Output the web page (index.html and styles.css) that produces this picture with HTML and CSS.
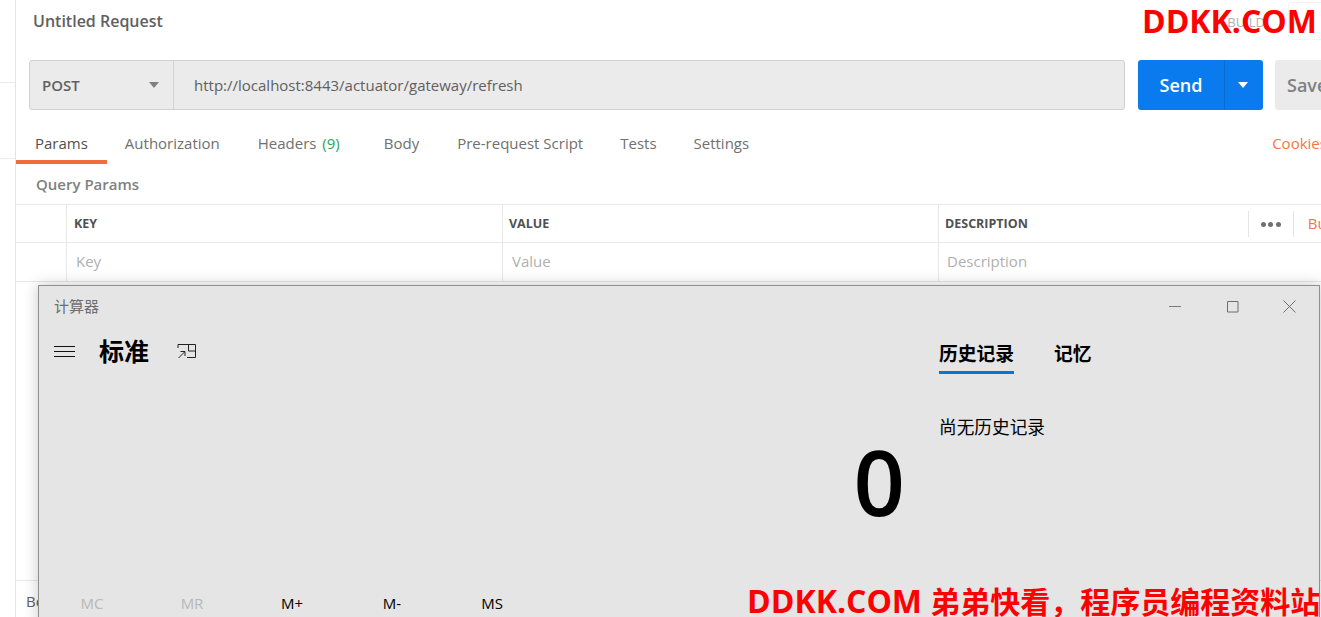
FILE: index.html
```html
<!DOCTYPE html>
<html lang="en">
<head>
    <meta charset="UTF-8">
    <meta name="viewport" content="width=device-width, initial-scale=1.0">
    <title>Untitled Request</title>
    <link rel="stylesheet" href="styles.css">
</head>
<body>
    <div class="app">
        <div class="sidebar">
            <div class="side-line side-line-first"></div>
            <div class="side-line side-line-second"></div>
        </div>
        <div class="main">
            <div class="title-row">
                <span class="title">Untitled Request</span>
                <span class="build">BUILD</span>
                <span class="build-box"></span>
            </div>
            <div class="url-row">
                <div class="url-box">
                    <div class="method">
                        <span>POST</span>
                        <span class="caret"></span>
                    </div>
                    <div class="url">http://localhost:8443/actuator/gateway/refresh</div>
                </div>
                <div class="send">
                    <span class="send-label">Send</span>
                    <span class="send-more"><span class="caret caret-white"></span></span>
                </div>
                <div class="save">Save</div>
            </div>
            <div class="tabs">
                <span class="tab tab-active">Params</span>
                <span class="tab">Authorization</span>
                <span class="tab tab-headers">Headers <em>(9)</em></span>
                <span class="tab">Body</span>
                <span class="tab tab-tight">Pre-request Script</span>
                <span class="tab tab-tight">Tests</span>
                <span class="tab">Settings</span>
                <span class="cookies">Cookies</span>
            </div>
            <div class="query-title">Query Params</div>
            <div class="table">
                <div class="table-row table-head">
                    <div class="cell cell-check"></div>
                    <div class="cell cell-key">KEY</div>
                    <div class="cell cell-value">VALUE</div>
                    <div class="cell cell-desc">
                        <span>DESCRIPTION</span>
                        <span class="more"><i></i><i></i><i></i></span>
                        <span class="bulk">Bulk Edit</span>
                    </div>
                </div>
                <div class="table-row table-empty">
                    <div class="cell cell-check"></div>
                    <div class="cell cell-key">Key</div>
                    <div class="cell cell-value">Value</div>
                    <div class="cell cell-desc">Description</div>
                </div>
            </div>
            <div class="response">
                <span>Body</span>
            </div>
        </div>
    </div>

    <div class="calc">
        <div class="calc-titlebar">
            <span class="calc-name">计算器</span>
            <div class="win-buttons">
                <svg width="13" height="13" viewBox="0 0 13 13"><path d="M0 6.500h12" stroke="#7a7a7a" fill="none"/></svg>
                <svg width="13" height="13" viewBox="0 0 13 13"><path d="M1.500 1.500h10.500v10.500h-10.500z" stroke="#6e6e6e" fill="none"/></svg>
                <svg width="13" height="13" viewBox="0 0 13 13"><path d="M.5.5l12 12M12.500.5l-12 12" stroke="#6e6e6e" fill="none"/></svg>
            </div>
        </div>
        <div class="calc-body">
            <div class="calc-left">
                <div class="calc-head">
                    <svg class="menu-icon" width="21" height="13" viewBox="0 0 21 13"><path d="M0 1.500h21M0 6.500h21M0 11.500h21" stroke="#111" fill="none"/></svg>
                    <span class="calc-mode">标准</span>
                    <svg class="overlay-icon" width="20" height="17" viewBox="0 0 20 17"><path d="M1 5V1.500h17.500v13H10M11.500 1.500v6.500h7M1.500 15l6-6M3.500 8.500h4.500v4.500" stroke="#222" fill="none"/></svg>
                </div>
                <div class="display">0</div>
                <div class="memory">
                    <span class="mem mem-off">MC</span>
                    <span class="mem mem-off">MR</span>
                    <span class="mem">M+</span>
                    <span class="mem">M-</span>
                    <span class="mem">MS</span>
                </div>
            </div>
            <div class="calc-right">
                <div class="calc-tabs">
                    <span class="calc-tab calc-tab-active">历史记录</span>
                    <span class="calc-tab">记忆</span>
                </div>
                <div class="no-history">尚无历史记录</div>
            </div>
        </div>
    </div>

    <div class="mark mark-top">DDKK.COM</div>
    <div class="mark mark-bottom">DDKK.COM <span class="mark-cjk">弟弟快看，程序员编程资料站</span></div>
</body>
</html>
```

FILE: styles.css
```css
* {
    box-sizing: border-box;
}

html, body {
    margin: 0;
    height: 100%;
    overflow: hidden;
}

body {
    font-family: "Open Sans", "Noto Sans CJK SC", sans-serif;
    font-size: 15px;
    color: #505050;
    background: #fff;
}

.app {
    display: flex;
    height: 617px;
}

.sidebar {
    width: 16px;
    flex-shrink: 0;
    border-right: 1px solid #e4e4e4;
}

.side-line {
    height: 1px;
    background: #ececec;
}

.side-line-first {
    margin-top: 82px;
}

.side-line-second {
    margin-top: 75px;
}

.main {
    flex: 1;
    min-width: 0;
    display: flex;
    flex-direction: column;
}

/* request title */
.title-row {
    height: 60px;
    padding: 10px 0 0 17px;
    display: flex;
}

.title {
    font-size: 16px;
    font-weight: 600;
    line-height: 22px;
    color: #606060;
}

.build {
    margin-left: auto;
    font-size: 13px;
    line-height: 24px;
    color: #b0b0b0;
}

.build-box {
    width: 40px;
    height: 38px;
    margin: -8px -7px 0 23px;
    border: 1px solid #f4f4f4;
    border-radius: 4px;
}

/* url row */
.url-row {
    display: flex;
    height: 50px;
    padding-left: 13px;
    white-space: nowrap;
}

.url-box {
    display: flex;
    flex-shrink: 0;
    width: 1096px;
    background: #ebebeb;
    border: 1px solid #d0d0d0;
    border-radius: 3px;
}

.method {
    width: 144px;
    display: flex;
    align-items: center;
    justify-content: space-between;
    padding: 0 14px 0 12px;
    border-right: 1px solid #d4d4d4;
    font-weight: 600;
    color: #606060;
}

.caret {
    width: 0;
    height: 0;
    border-left: 5px solid transparent;
    border-right: 5px solid transparent;
    border-top: 6px solid #808080;
}

.caret-white {
    border-top-color: #fff;
}

.url {
    padding-left: 20px;
    line-height: 48px;
    color: #606060;
}

.send {
    display: flex;
    flex-shrink: 0;
    width: 125px;
    margin-left: 13px;
    background: #0a7bef;
    border-radius: 3px;
    color: #fff;
    font-size: 18px;
    font-weight: 600;
    line-height: 50px;
}

.send-label {
    width: 86px;
    text-align: center;
}

.send-more {
    flex: 1;
    display: flex;
    align-items: center;
    justify-content: center;
    padding-right: 2px;
    border-left: 1px solid #0a6ad0;
}

.save {
    flex-shrink: 0;
    width: 60px;
    margin-left: 12px;
    padding-left: 12px;
    background: #ebebeb;
    border-radius: 3px 0 0 3px;
    color: #808080;
    font-size: 18px;
    font-weight: 600;
    line-height: 50px;
}

/* tabs */
.tabs {
    display: flex;
    height: 36px;
    margin-top: 18px;
    white-space: nowrap;
    color: #707070;
}

.tab {
    padding: 5px 19px 0;
    line-height: 20px;
}

.tab em {
    font-style: normal;
    color: #26a65b;
    margin-left: 2px;
}

.tab-active {
    width: 91px;
    margin-right: -1px;
    color: #505050;
    border-bottom: 4px solid #f26b3a;
}

.tab-headers {
    padding-right: 25px;
}

.tab-tight {
    margin-right: -1px;
}

.cookies {
    margin-left: 504px;
    padding-top: 5px;
    line-height: 20px;
    color: #f4764a;
}

.query-title {
    height: 40px;
    padding: 10px 0 0 20px;
    font-weight: 600;
    line-height: 20px;
    color: #808080;
}

/* params table */
.table {
    border-top: 1px solid #e8e8e8;
}

.table-row {
    display: flex;
    border-bottom: 1px solid #e8e8e8;
    white-space: nowrap;
}

.table-head {
    height: 38px;
    font-size: 12.500px;
    font-weight: 700;
    line-height: 37px;
    color: #505050;
}

.table-empty {
    height: 39px;
    line-height: 37px;
    color: #b0b0b0;
}

.cell {
    padding-left: 6px;
    border-left: 1px solid #e8e8e8;
}

.cell-check {
    width: 50px;
    padding: 0;
    border-left: 0;
}

.cell-key,
.cell-value {
    width: 436px;
}

.table-head .cell-key {
    padding-left: 7px;
}

.table-empty .cell {
    padding-left: 9px;
}

.table-empty .cell-desc {
    padding-left: 8px;
}

.cell-desc {
    flex: 1;
    min-width: 0;
    display: flex;
    overflow: hidden;
}

.more {
    display: flex;
    align-items: center;
    gap: 2.500px;
    height: 26px;
    margin: 6px 0 0 220px;
    padding: 0 12px;
    border-left: 1px solid #e4e4e4;
    border-right: 1px solid #e4e4e4;
}

.more i {
    width: 5px;
    height: 5px;
    border-radius: 50%;
    background: #707070;
}

.bulk {
    margin-left: 14px;
    font-size: 15px;
    font-weight: 400;
    color: #f4764a;
}

.response {
    margin-top: auto;
    height: 37px;
    padding: 10px 0 0 10px;
    border-top: 1px solid #e8e8e8;
    line-height: 20px;
    color: #606060;
}

/* calculator window */
.calc {
    position: absolute;
    left: 38px;
    top: 285px;
    width: 1282px;
    height: 340px;
    background: #e5e5e5;
    border: 1px solid #8e8e8e;
    box-shadow: 0 0 14px rgba(0, 0, 0, 0.22);
    color: #000;
    font-family: "Noto Sans CJK SC", "Open Sans", sans-serif;
}

.calc-titlebar {
    display: flex;
    justify-content: space-between;
    align-items: center;
    height: 41px;
    padding: 0 23px 0 15px;
}

.calc-name {
    margin-bottom: 2px;
    font-size: 15px;
    color: #6e6e6e;
}

.win-buttons {
    display: flex;
    gap: 44px;
}

.calc-body {
    display: flex;
}

.calc-left {
    width: 900px;
    padding-left: 15px;
}

.calc-head {
    display: flex;
    align-items: center;
    height: 50px;
    margin-top: -1px;
}

.calc-mode {
    margin: 0 0 2px 14px;
    font-size: 25px;
    font-weight: 700;
    line-height: 48px;
}

.menu-icon {
    margin-right: 10px;
}

.overlay-icon {
    margin-left: 28px;
}

.display {
    margin-top: 47px;
    padding-right: 34px;
    text-align: right;
    font-family: "Open Sans", sans-serif;
    font-size: 90px;
    font-weight: 600;
    line-height: 116px;
}

.memory {
    display: flex;
    margin: 54px 0 0 -12px;
}

.mem {
    width: 100px;
    text-align: center;
    font-family: "Open Sans", sans-serif;
    font-size: 15px;
    font-weight: 500;
    line-height: 20px;
}

.mem-off {
    color: #b8b8b8;
    font-weight: 400;
}

.calc-right {
    flex: 1;
}

.calc-tabs {
    display: flex;
    gap: 40px;
    margin-top: 11px;
}

.calc-tab {
    height: 36px;
    font-size: 18.750px;
    font-weight: 700;
    line-height: 30px;
}

.calc-tab-active {
    border-bottom: 3px solid #0078d7;
}

.no-history {
    margin-top: 40px;
    font-size: 17.670px;
    line-height: 26px;
}

/* watermarks */
.mark {
    position: absolute;
    color: #f00;
    font-family: "Open Sans", "Noto Sans CJK SC", sans-serif;
    font-weight: 700;
    white-space: nowrap;
}

.mark-top {
    right: 4px;
    top: 0;
    font-size: 32px;
    line-height: 42px;
}

.mark-bottom {
    left: 747px;
    top: 580px;
    font-size: 32px;
    line-height: 42px;
}

.mark-cjk {
    font-size: 30px;
}
```
